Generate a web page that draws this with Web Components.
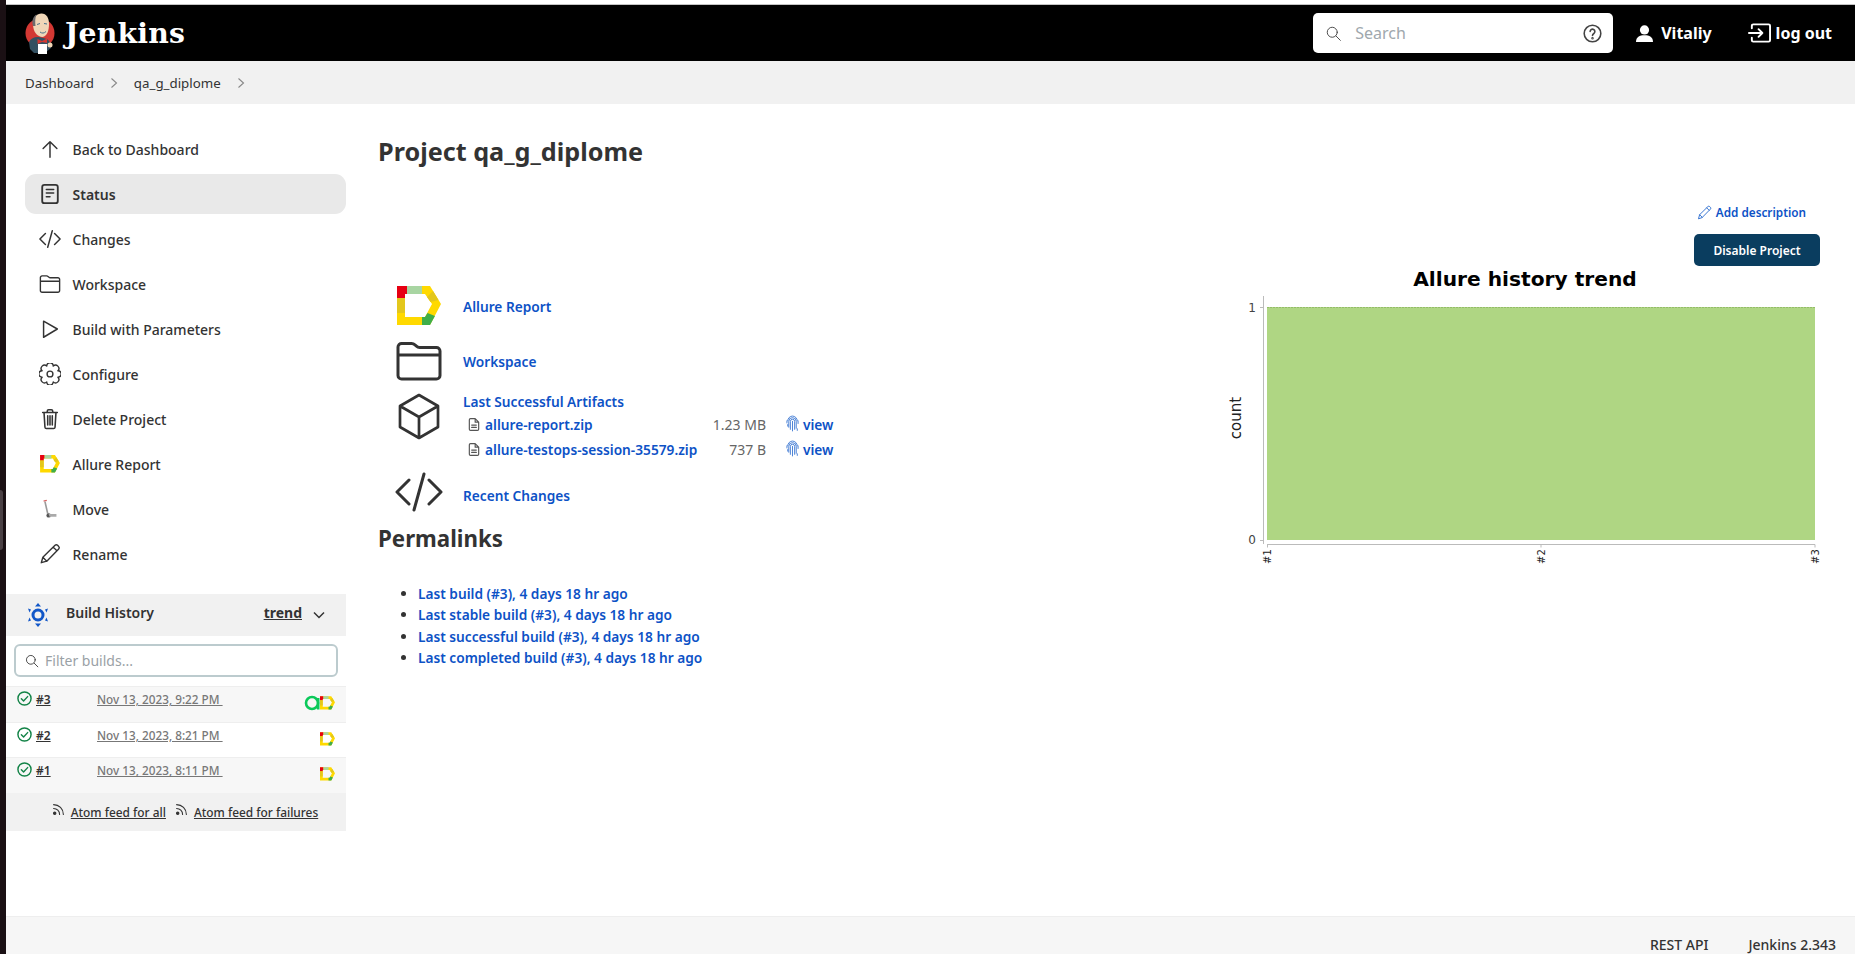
<!DOCTYPE html>
<html>
<head>
<meta charset="utf-8">
<title>qa_g_diplome - Jenkins</title>
<style>
  html, body { margin: 0; height: 100%; overflow: hidden; background: #fff; }
  body { display: flex; font-family: "Noto Sans", sans-serif; font-size: 14px; color: #333; }
</style>
</head>
<body>
<jk-edge></jk-edge>
<jk-page>
  <jk-header></jk-header>
  <jk-breadcrumb></jk-breadcrumb>
  <jk-layout>
    <jk-sidebar slot="side">
      <jk-task icon="up">Back to Dashboard</jk-task>
      <jk-task icon="status" active>Status</jk-task>
      <jk-task icon="code">Changes</jk-task>
      <jk-task icon="folder">Workspace</jk-task>
      <jk-task icon="play">Build with Parameters</jk-task>
      <jk-task icon="gear">Configure</jk-task>
      <jk-task icon="trash">Delete Project</jk-task>
      <jk-task icon="allure">Allure Report</jk-task>
      <jk-task icon="move">Move</jk-task>
      <jk-task icon="pencil">Rename</jk-task>
      <jk-build-history>
        <jk-build num="#3" date="Nov 13, 2023, 9:22 PM" shade testops></jk-build>
        <jk-build num="#2" date="Nov 13, 2023, 8:21 PM"></jk-build>
        <jk-build num="#1" date="Nov 13, 2023, 8:11 PM" shade></jk-build>
      </jk-build-history>
    </jk-sidebar>
    <jk-project slot="main"></jk-project>
  </jk-layout>
  <jk-footer></jk-footer>
</jk-page>

<script>
const gearPath = (() => {
  let d = ''
  const n = 8
  for (let i = 0; i < n; i++) {
    const a = (i / n) * Math.PI * 2 - Math.PI / 8
    const b = ((i + 1) / n) * Math.PI * 2 - Math.PI / 8
    const x = 12 + 9.3 * Math.cos(a), y = 12 + 9.3 * Math.sin(a)
    const x2 = 12 + 9.3 * Math.cos(b), y2 = 12 + 9.3 * Math.sin(b)
    d += (i ? '' : `M${x.toFixed(2)} ${y.toFixed(2)}`) + `A2.9 2.9 0 0 1 ${x2.toFixed(2)} ${y2.toFixed(2)}`
  }
  return d + 'Z'
})()

const line = 'fill="none" stroke="currentColor" stroke-linecap="round" stroke-linejoin="round"'

const icons = {
  up: `<svg viewBox="0 0 24 24" ${line} stroke-width="1.6"><path d="M12 21V4M4.500 11.500L12 4l7.500 7.500"/></svg>`,
  status: `<svg viewBox="0 0 24 24" ${line} stroke-width="2"><rect x="3.500" y="2" width="17" height="20" rx="2.500"/><path d="M8 7h8M8 11h8M8 15h4" stroke-width="1.700"/></svg>`,
  code: `<svg viewBox="0 0 24 24" ${line} stroke-width="1.600"><path d="M7 6l-6 6 6 6M17 6l6 6-6 6M14.500 3l-5 18"/></svg>`,
  folder: `<svg viewBox="0 0 24 24" ${line} stroke-width="1.500"><path d="M1.500 6.500V5a1.800 1.800 0 0 1 1.800-1.800h5c.9 0 1.300.4 2 1s1 1 2 1h8.400A1.800 1.800 0 0 1 22.500 7v12.200a1.800 1.800 0 0 1-1.800 1.800H3.300a1.800 1.800 0 0 1-1.800-1.800ZM1.500 9H22.500"/></svg>`,
  play: `<svg viewBox="0 0 24 24" ${line} stroke-width="1.600"><path d="M5 3.500L20 12 5 21Z"/></svg>`,
  gear: `<svg viewBox="0 0 24 24" ${line} stroke-width="1.500"><path d="${gearPath}"/><circle cx="12" cy="12" r="3.200"/></svg>`,
  trash: `<svg viewBox="0 0 24 24" ${line} stroke-width="1.700"><path d="M4 5h16M9 5V3.500A1.500 1.500 0 0 1 10.500 2h3A1.500 1.500 0 0 1 15 3.500V5M5.500 5l1 16a1.500 1.500 0 0 0 1.500 1.300h8a1.500 1.500 0 0 0 1.500-1.300l1-16M9.500 8.500v10M12 8.500v10M14.500 8.500v10"/></svg>`,
  allure: `<svg class="al" viewBox="0 0 44 40">
    <path fill="#ffd900" fill-rule="evenodd" d="M0 0H33L44 18L33 39H0ZM8 8V31H28L35 18L28 8Z"/>
    <path fill="#e60012" d="M0 0H10V8H8V12H0Z"/>
    <path fill="#a8d5a2" d="M10 0H25V8H10Z"/>
    <path fill="#e3c71c" d="M0 12H8V27H0ZM36 5L41.500 14L33.500 16L30 11Z"/>
    <path fill="#3fae49" d="M25 31H28L30.500 27L38 30L33 39H25Z"/>
  </svg>`,
  move: `<svg viewBox="0 0 24 24"><path d="M5 3.500L8.500 2.500" stroke="#d9605f" stroke-width="1.500" fill="none"/><path d="M6.500 4L9.500 17" stroke="#9a9a9a" stroke-width="1.800" fill="none"/><circle cx="10.500" cy="19" r="2.400" fill="#555"/><path d="M10.500 17.500H19V20.500H11.500Z" fill="#aaa"/></svg>`,
  pencil: `<svg viewBox="0 0 24 24" ${line} stroke-width="1.500"><path d="M2.500 21.500l1.700-6L17.500 2.500a2 2 0 0 1 2.800 0l1.200 1.200a2 2 0 0 1 0 2.800L8.500 19.800ZM4.200 15.500l4.300 4.300M15.500 4.500l4 4"/></svg>`,
  search: `<svg viewBox="0 0 24 24" ${line} stroke-width="1.500"><circle cx="10" cy="10" r="7.500"/><path d="M16 16l6 6"/></svg>`,
  file: `<svg class="f" viewBox="0 0 24 24" ${line} stroke-width="2"><path d="M14 2H6a2 2 0 0 0-2 2v16a2 2 0 0 0 2 2h12a2 2 0 0 0 2-2V8ZM14 2v6h6M8 13h8M8 17h8"/></svg>`,
  rss: `<svg viewBox="0 0 24 24" ${line} stroke-width="2"><circle cx="5" cy="19" r="2.200" fill="currentColor"/><path d="M3 10a11 11 0 0 1 11 11M3 3a18 18 0 0 1 18 18"/></svg>`,
  check: `<svg viewBox="0 0 24 24" fill="none" stroke="#138347" stroke-linecap="round" stroke-linejoin="round" stroke-width="2.300"><circle cx="12" cy="12" r="10.500"/><path d="M7 12.500l3.500 3.500L17 9"/></svg>`,
  print: `<svg class="p" viewBox="0 0 24 32" fill="none" stroke="#2f6fd0" stroke-width="1.600" stroke-linecap="round"><path d="M3 11a9 9 0 0 1 18 0M1.500 15v-4M22.500 16v-5M5 23V12a7 7 0 0 1 14 0v13M8 27V12a4 4 0 0 1 8 0v15M12 30V12M3 21v-3M21 29v-3"/></svg>`
}

class JkEdge extends HTMLElement {
  constructor() {
    super()
    this.shadow = this.attachShadow({ mode: "open" })
  }
  connectedCallback() {
    this.shadow.innerHTML = `<style>
      :host { display: block; position: relative; width: 6px; flex: none; background: #1a1014; }
      .thumb { position: absolute; left: 0; top: 490px; width: 3px; height: 60px; background: #4a4044; border-radius: 0 3px 3px 0; }
    </style><div class="thumb"></div>`
  }
}
customElements.define('jk-edge', JkEdge)

class JkPage extends HTMLElement {
  constructor() {
    super()
    this.shadow = this.attachShadow({ mode: "open" })
  }
  connectedCallback() {
    this.shadow.innerHTML = `<style>
      :host { display: flex; flex-direction: column; flex: 1; min-width: 0; height: 954px; box-sizing: border-box; border-top: 4px solid #fff; }
      .rule { height: 1px; background: #c4c4c4; flex: none; }
    </style><div class="rule"></div><slot></slot>`
  }
}
customElements.define('jk-page', JkPage)

class JkHeader extends HTMLElement {
  constructor() {
    super()
    this.shadow = this.attachShadow({ mode: "open" })
  }
  connectedCallback() {
    this.shadow.innerHTML = `<style>
      :host { display: flex; align-items: center; height: 56px; flex: none; background: #000; color: #fff; padding: 0 23px 0 19px; box-sizing: border-box; }
      .logo { width: 31px; height: 42px; flex: none; margin-right: 9px; }
      .brand { font: bold 28.300px "DejaVu Serif", serif; letter-spacing: .2px; line-height: 1; }
      .search { margin-left: auto; display: flex; align-items: center; width: 300px; height: 40px; background: #fff; border-radius: 5px; box-sizing: border-box; padding: 0 11px 0 13px; color: #333; }
      .search svg.s { width: 15px; height: 15px; color: #444; margin-right: 14px; }
      .search span { flex: 1; color: #a0a8ad; font-size: 16px; }
      .search svg.h { width: 19px; height: 19px; color: #444; }
      .user { display: flex; align-items: center; font-size: 16px; font-weight: 700; margin-left: 23px; }
      .user svg { width: 17px; height: 17px; margin-right: 8px; }
      .logout { display: flex; align-items: center; font-size: 16px; font-weight: 700; margin-left: 36px; }
      .logout svg { width: 23px; height: 20px; margin-right: 5px; }
    </style>
    <svg class="logo" viewBox="0 0 31 42">
      <circle cx="15" cy="21" r="14.500" fill="#d33833"/>
      <path d="M4 30C6 26 10 24.500 14 25L22 27C25 29 26 33 26 36L20 41H9L5 37Z" fill="#335061"/>
      <path d="M8 12C8 5 12 1.500 16.500 1.500C21.500 1.500 24 6 24 12C24 19 22 24 17.500 25C12.500 25 8 20 8 12Z" fill="#f0d6b7"/>
      <path d="M8 14C6.500 9 8 4.500 11.500 2.500C10 6 10 10 10.500 14Z" fill="#6d6b6d"/>
      <path d="M12 12.500l3-1M19 11.500l3 .5M15 20c2 1.500 4 1.500 6-.5" stroke="#49728b" stroke-width="1" fill="none"/>
      <path d="M12.500 27L17 29L22 26.500L22 31L17 30L12.500 32Z" fill="#d33833"/>
      <rect x="13" y="32" width="9" height="10" fill="#fff"/>
      <circle cx="25" cy="33" r="2.500" fill="#f0d6b7"/>
    </svg>
    <span class="brand">Jenkins</span>
    <div class="search">
      <svg class="s" viewBox="0 0 24 24" ${line} stroke-width="1.500"><circle cx="10" cy="10" r="8"/><path d="M16 16l7 7"/></svg>
      <span>Search</span>
      <svg class="h" viewBox="0 0 24 24" fill="none" stroke="currentColor" stroke-width="2"><circle cx="12" cy="12" r="10.500"/><path d="M9 9.500a3 3 0 1 1 4.700 2.500c-1 .7-1.700 1.300-1.700 2.500" stroke-linecap="round"/><circle cx="12" cy="18" r=".6"/></svg>
    </div>
    <div class="user">
      <svg viewBox="0 0 24 24" fill="currentColor"><circle cx="12" cy="7" r="6.500"/><path d="M0 24c0-7 5-9.500 12-9.500S24 17 24 24Z"/></svg>
      Vitaliy
    </div>
    <div class="logout">
      <svg viewBox="0 0 24 20" ${line} stroke-width="2"><path d="M4 5V2.500A1.500 1.500 0 0 1 5.500 1h16A1.500 1.500 0 0 1 23 2.500v15a1.500 1.500 0 0 1-1.500 1.500h-16A1.500 1.500 0 0 1 4 17.500V15M1 10h14M11 6l4 4-4 4"/></svg>
      log out
    </div>`
  }
}
customElements.define('jk-header', JkHeader)

class JkBreadcrumb extends HTMLElement {
  constructor() {
    super()
    this.shadow = this.attachShadow({ mode: "open" })
  }
  connectedCallback() {
    const chev = `<svg viewBox="0 0 8 12" fill="none" stroke="#888" stroke-width="1.100"><path d="M1.500 1.500L6.500 6l-5 4.500"/></svg>`
    this.shadow.innerHTML = `<style>
      :host { display: flex; align-items: center; height: 43px; flex: none; background: #f1f1f1; padding-left: 19px; color: #333; font-size: 13.300px; }
      svg { width: 8px; height: 12px; margin: 0 16px 0 16px; }
    </style>
    <span>Dashboard</span>${chev}<span>qa_g_diplome</span>${chev}`
  }
}
customElements.define('jk-breadcrumb', JkBreadcrumb)

class JkLayout extends HTMLElement {
  constructor() {
    super()
    this.shadow = this.attachShadow({ mode: "open" })
  }
  connectedCallback() {
    this.shadow.innerHTML = `<style>
      :host { display: grid; grid-template-columns: 340px 1fr; flex: 1; min-height: 0; }
    </style><slot name="side"></slot><slot name="main"></slot>`
  }
}
customElements.define('jk-layout', JkLayout)

class JkSidebar extends HTMLElement {
  constructor() {
    super()
    this.shadow = this.attachShadow({ mode: "open" })
  }
  connectedCallback() {
    this.shadow.innerHTML = `<style>
      :host { display: flex; flex-direction: column; gap: 5px; padding-top: 25px; }
    </style><slot></slot>`
  }
}
customElements.define('jk-sidebar', JkSidebar)

class JkTask extends HTMLElement {
  constructor() {
    super()
    this.shadow = this.attachShadow({ mode: "open" })
  }
  connectedCallback() {
    const active = this.hasAttribute('active')
    this.shadow.innerHTML = `<style>
      :host { display: flex; align-items: center; height: 40px; margin-left: 19px; box-sizing: border-box; padding-left: 13px; gap: 11.500px; border-radius: 11px; color: #333; font-weight: ${active ? 600 : 500};
        ${active ? 'background: #e9e9e9;' : ''} }
      .i { width: 23px; height: 22px; flex: none; display: flex; align-items: center; justify-content: center; }
      svg { width: 22px; height: 22px; }
      svg.al { width: 20px; height: 18px; }
    </style><span class="i">${icons[this.getAttribute('icon')]}</span><span><slot></slot></span>`
  }
}
customElements.define('jk-task', JkTask)

class JkBuildHistory extends HTMLElement {
  constructor() {
    super()
    this.shadow = this.attachShadow({ mode: "open" })
  }
  connectedCallback() {
    this.shadow.innerHTML = `<style>
      :host { display: block; margin-top: 15px; }
      .head { display: flex; align-items: center; height: 42px; background: #f1f1f1; padding: 0 21px 0 21px; font-weight: 600; }
      .head svg.gh { width: 22px; height: 24px; margin-right: 17px; }
      .head .t { flex: 1; padding-bottom: 6px; }
      .head u { margin-right: 11px; padding-bottom: 6px; font-weight: 700; }
      .head svg.ch { width: 12px; height: 8px; }
      .filter { display: flex; align-items: center; height: 33px; margin: 8px 8px 9px 8px; border: 2px solid #bccbce; border-radius: 6px; box-sizing: border-box; padding-left: 9px; color: #9aa1a6; }
      .filter svg { width: 14px; height: 14px; color: #333; margin-right: 6px; }
      .feeds { display: flex; align-items: center; justify-content: center; gap: 9px; height: 38px; background: #f1f1f1; font-size: 11.900px; font-weight: 500; padding-left: 18px; }
      .feeds span { display: flex; gap: 6px; align-items: center; }
      .feeds svg { width: 13px; height: 13px; margin-top: -5px; }
    </style>
    <div class="head">
      <svg class="gh" viewBox="0 0 22 24" fill="#1257c8"><path fill-rule="evenodd" d="M11 5.500a6.500 6.500 0 1 1 0 13 6.500 6.500 0 0 1 0-13Zm0 3a3.500 3.500 0 1 0 0 7 3.500 3.500 0 0 0 0-7Z"/><path d="M8 3.500L11 0l3 3.500ZM8 20.500L11 24l3-3.500ZM1 5.500L4 6.500 2.500 9.500ZM21 5.500L18 6.500l1.500 3ZM1 18.500L4 17.500l-1.500-3ZM21 18.500L18 17.500l1.500-3Z"/></svg>
      <span class="t">Build History</span><u>trend</u>
      <svg class="ch" viewBox="0 0 12 8" fill="none" stroke="#333" stroke-width="1.500"><path d="M1 1.500l5 5 5-5"/></svg>
    </div>
    <div class="filter">${icons.search}<span>Filter builds...</span></div>
    <slot></slot>
    <div class="feeds">
      <span>${icons.rss}<u>Atom feed for all</u></span>
      <span>${icons.rss}<u>Atom feed for failures</u></span>
    </div>`
  }
}
customElements.define('jk-build-history', JkBuildHistory)

class JkBuild extends HTMLElement {
  constructor() {
    super()
    this.shadow = this.attachShadow({ mode: "open" })
  }
  connectedCallback() {
    const shade = this.hasAttribute('shade')
    const testops = this.hasAttribute('testops')
    this.shadow.innerHTML = `<style>
      :host { display: grid; grid-template-columns: 80px 1fr auto; height: 35.700px; box-sizing: border-box; padding: 4px 11px 0 11px; font-size: 12px; background: ${shade ? '#f7f7f7' : '#fff'}; border-top: 1px solid #eee; }
      .n { display: flex; align-items: flex-start; gap: 4px; font-weight: 600; }
      .n svg { width: 15px; height: 15px; flex: none; }
      .d { color: #777; font-weight: 500; font-size: 11.750px; }
      .b { display: flex; align-items: center; height: 24px; align-self: start; }
      .b svg.al { width: 15px; height: 14px; }
      .b svg.to { width: 16px; height: 16px; }
    </style>
    <span class="n">${icons.check}<u>${this.getAttribute('num')}</u></span>
    <span class="d"><u>${this.getAttribute('date')}&nbsp;</u></span>
    <span class="b">
      ${testops ? `<svg class="to" viewBox="0 0 16 16" fill="none" stroke="#0bc95a" stroke-width="2.600"><circle cx="8" cy="8" r="6"/><path d="M14.200 3V14.500"/></svg>` : ''}
      ${icons.allure}
    </span>`
  }
}
customElements.define('jk-build', JkBuild)

class JkProject extends HTMLElement {
  constructor() {
    super()
    this.shadow = this.attachShadow({ mode: "open" })
  }
  connectedCallback() {
    this.shadow.innerHTML = `<style>
      :host { display: flex; justify-content: space-between; padding: 0 35px 0 33px; --link: #0d52c6; }
      a, .a { color: var(--link); font-weight: 600; font-size: 13.700px; text-decoration: none; }
      h1 { font-size: 25.200px; font-weight: 700; margin: 0 0 0 -1px; padding-top: 30px; line-height: 34px; }
      h2 { font-size: 22.300px; font-weight: 700; margin: 0 0 0 -1px; line-height: 30px; padding-top: 9px; }
      .left { display: flex; flex-direction: column; }
      .rows { padding-left: 18px; margin-top: 115.500px; display: flex; flex-direction: column; }
      .row { display: flex; align-items: center; gap: 22px; height: 45px; }
      .row + .row { margin-top: 10px; }
      .ic { width: 44px; height: 40px; flex: none; display: flex; align-items: center; justify-content: center; color: #333; }
      .ic svg { width: 48px; height: 48px; flex: none; stroke-width: 1.500; }
      .ic svg.al { width: 44px; height: 40px; }
      .art { height: 72px; align-items: flex-start; }
      .row.art { margin-top: 7px; }
      .art .ic { margin-top: 4px; height: 42px; }
      .art .ic svg { stroke-width: 1.350; }
      .files { display: grid; grid-template-columns: 22px 211px 70px 33px auto; grid-template-rows: 19px 21px 23px; row-gap: 3px; align-items: center; margin: 1.500px 0 0 0; white-space: nowrap; }
      .title { grid-column: 1 / -1; }
      .files svg.f { width: 14px; height: 15px; color: #555; margin-left: 4px; }
      .files .sz { text-align: right; color: #666; font-weight: 400; }
      .files svg.p { width: 13px; height: 17px; margin-left: 20px; margin-top: -2px; }
      .files .v { margin-left: 4px; }
      .row.chg { margin-top: 12.500px; height: 40px; }
      .chg .ic svg { margin-top: -6px; }
      ul { margin: 29px 0 0; padding-left: 39px; line-height: 21.300px; }
      li::marker { color: #333; }
      .right { width: 600px; display: flex; flex-direction: column; align-items: flex-end; padding-top: 96px; }
      .add { display: flex; align-items: center; gap: 4px; font-size: 11.750px; margin-right: 14px; height: 24px; }
      .add svg { width: 15px; height: 15px; color: #2f6fd0; }
      button { font: 600 12px "Noto Sans", sans-serif; width: 126px; height: 32px; margin-top: 10px; background: #0a3d5f; color: #fff; border: 0; border-radius: 5px; padding: 0; }
      svg.chart { display: block; width: 615px; height: 300px; margin-right: -15px; }
      svg.chart text { font-family: "DejaVu Sans", sans-serif; }
    </style>
    <div class="left">
      <h1>Project qa_g_diplome</h1>
      <div class="rows">
        <div class="row"><span class="ic">${icons.allure}</span><a>Allure Report</a></div>
        <div class="row"><span class="ic">${icons.folder}</span><a>Workspace</a></div>
        <div class="row art">
          <span class="ic"><svg viewBox="0 0 24 24" ${line}><path d="M12 1.500L21.500 7v10.500L12 23 2.500 17.500V7ZM2.500 7L12 12.500 21.500 7M12 12.500V23"/></svg></span>
          <div class="files">
            <a class="title">Last Successful Artifacts</a>
            ${icons.file}<a>allure-report.zip</a><span class="sz">1.23 MB</span>${icons.print}<a class="v">view</a>
            ${icons.file}<a>allure-testops-session-35579.zip</a><span class="sz">737 B</span>${icons.print}<a class="v">view</a>
          </div>
        </div>
        <div class="row chg"><span class="ic">${icons.code}</span><a>Recent Changes</a></div>
      </div>
      <h2>Permalinks</h2>
      <ul>
        <li><a>Last build (#3), 4 days 18 hr ago</a></li>
        <li><a>Last stable build (#3), 4 days 18 hr ago</a></li>
        <li><a>Last successful build (#3), 4 days 18 hr ago</a></li>
        <li><a>Last completed build (#3), 4 days 18 hr ago</a></li>
      </ul>
    </div>
    <div class="right">
      <a class="add">${icons.pencil}Add description</a>
      <button>Disable Project</button>
      <svg class="chart" viewBox="0 0 615 300">
        <text x="305" y="20" text-anchor="middle" font-size="20.200" font-weight="700" fill="#000">Allure history trend</text>
        <rect x="47" y="41" width="548" height="233" fill="#afd683"/>
        <path d="M47 41.500H595" stroke="#94bc68" stroke-dasharray="2 1"/>
        <path d="M43.500 30V278M47 278.500H595M47.500 278.500v3M321 278.500v3M595 278.500v3M40 41.500h3M40 274.500h3" stroke="#bbb" fill="none"/>
        <text x="36" y="46" text-anchor="end" font-size="12" fill="#444">1</text>
        <text x="36" y="278" text-anchor="end" font-size="12" fill="#444">0</text>
        <text transform="translate(21 152) rotate(-90)" text-anchor="middle" font-size="15" fill="#222">count</text>
        <text transform="translate(51 298) rotate(-90)" font-size="10" fill="#222">#1</text>
        <text transform="translate(325 298) rotate(-90)" font-size="10" fill="#222">#2</text>
        <text transform="translate(598.500 298) rotate(-90)" font-size="10" fill="#222">#3</text>
      </svg>
    </div>`
  }
}
customElements.define('jk-project', JkProject)

class JkFooter extends HTMLElement {
  constructor() {
    super()
    this.shadow = this.attachShadow({ mode: "open" })
  }
  connectedCallback() {
    this.shadow.innerHTML = `<style>
      :host { display: flex; justify-content: flex-end; align-items: center; gap: 40px; height: 38px; flex: none; background: #f6f6f6; border-top: 1px solid #eee; padding: 18px 19px 0 0; box-sizing: border-box; font-weight: 500; color: #333; }
    </style><span>REST API</span><span>Jenkins 2.343</span>`
  }
}
customElements.define('jk-footer', JkFooter)
</script>
</body>
</html>
